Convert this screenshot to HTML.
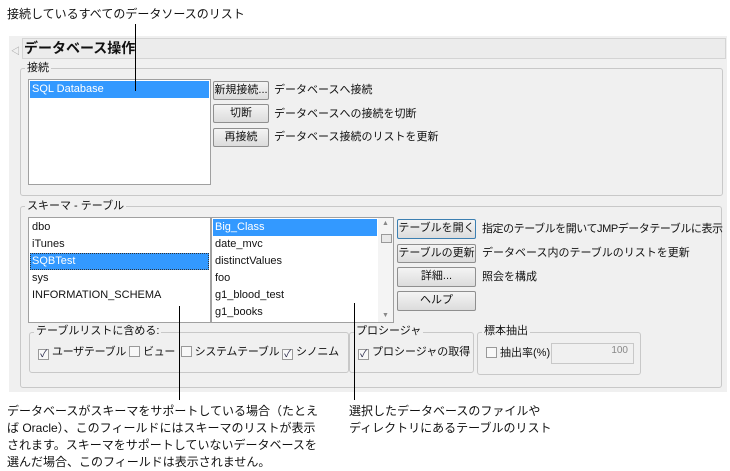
<!DOCTYPE html>
<html><head><meta charset="utf-8"><style>
*{box-sizing:border-box;margin:0;padding:0}
body{width:730px;height:469px;background:#fff;position:relative;overflow:hidden;font-family:"Liberation Sans","Noto Sans CJK JP",sans-serif;font-size:11px;color:#111}
.a{position:absolute}
.panel{left:9px;top:36px;width:718px;height:356px;background:#f0f0f0}
.hdr{left:22px;top:38px;width:704px;height:21px;background:#ececec;border:1px solid #d4d4d4;font-weight:bold;font-size:14px;padding:0 0 0 1px;line-height:18px}
.grp{border:1px solid #c8c8c8;border-radius:3px}
.lg{background:#f0f0f0;padding:0 2px;font-size:11px;line-height:12px}
.list{background:#fff;border:1px solid #a0a0a0}
.row{position:absolute;left:1px;height:17px;line-height:17px;padding-left:2px;font-size:11px}
.sel{background:#3399ff;color:#fff}
.btn{border:1px solid #8f8f8f;border-radius:2px;background:linear-gradient(#f4f4f4,#dcdcdc);text-align:center;font-size:11px;line-height:17px;white-space:nowrap;overflow:hidden}
.t{font-size:11px;line-height:14px;white-space:nowrap}
.cb{display:inline-block;width:11px;height:11px;border:1px solid #999;background:#f8f8f8;vertical-align:-2px;margin-right:3px;font-size:10px;line-height:9px;text-align:center;color:#224}
.ln{background:#000;width:1px}
.ann{font-size:12px;line-height:17px;color:#111;white-space:nowrap}
</style></head><body>
<div class="a ann" style="left:7px;top:6px">接続しているすべてのデータソースのリスト</div>
<div class="a panel"></div>
<div class="a" style="left:11px;top:44px;font-size:9px;color:#999">◁</div>
<div class="a hdr">データベース操作</div>

<div class="a grp" style="left:20px;top:68px;width:703px;height:128px"></div>
<div class="a lg" style="left:25px;top:62px">接続</div>
<div class="a list" style="left:28px;top:79px;width:183px;height:106px">
<div class="row sel" style="top:1px;width:179px">SQL Database</div></div>
<div class="a btn" style="left:213px;top:81px;width:56px;height:19px">新規接続...</div>
<div class="a btn" style="left:213px;top:104px;width:56px;height:19px">切断</div>
<div class="a btn" style="left:213px;top:128px;width:56px;height:19px">再接続</div>
<div class="a t" style="left:274px;top:83px">データベースへ接続</div>
<div class="a t" style="left:274px;top:107px">データベースへの接続を切断</div>
<div class="a t" style="left:274px;top:130px">データベース接続のリストを更新</div>

<div class="a grp" style="left:20px;top:206px;width:702px;height:182px"></div>
<div class="a lg" style="left:25px;top:200px">スキーマ - テーブル</div>
<div class="a list" style="left:28px;top:217px;width:183px;height:106px">
<div class="row" style="top:1px">dbo</div>
<div class="row" style="top:18px">iTunes</div>
<div class="row sel" style="top:35px;width:179px;outline:1px dotted #333;outline-offset:-1px">SQBTest</div>
<div class="row" style="top:52px">sys</div>
<div class="row" style="top:69px">INFORMATION_SCHEMA</div></div>
<div class="a list" style="left:211px;top:217px;width:183px;height:106px">
<div class="row sel" style="top:1px;width:164px">Big_Class</div>
<div class="row" style="top:18px">date_mvc</div>
<div class="row" style="top:35px">distinctValues</div>
<div class="row" style="top:52px">foo</div>
<div class="row" style="top:69px">g1_blood_test</div>
<div class="row" style="top:86px">g1_books</div>
<div class="a" style="left:166px;top:0;width:15px;height:104px;background:#f4f4f4"></div>
<div class="a" style="left:169px;top:16px;width:11px;height:9px;border:1px solid #999;background:#e8e8e8"></div>
<div class="a" style="left:170px;top:2px;font-size:7px;color:#888">▲</div>
<div class="a" style="left:170px;top:94px;font-size:7px;color:#888">▼</div></div>
<div class="a btn" style="left:397px;top:219px;width:79px;height:20px;border-color:#3c7fb1">テーブルを開く</div>
<div class="a btn" style="left:397px;top:244px;width:79px;height:19px">テーブルの更新</div>
<div class="a btn" style="left:397px;top:267px;width:79px;height:20px">詳細...</div>
<div class="a btn" style="left:397px;top:291px;width:79px;height:20px">ヘルプ</div>
<div class="a t" style="left:482px;top:222px;letter-spacing:-0.45px">指定のテーブルを開いてJMPデータテーブルに表示</div>
<div class="a t" style="left:482px;top:246px">データベース内のテーブルのリストを更新</div>
<div class="a t" style="left:482px;top:270px">照会を構成</div>

<div class="a grp" style="left:29px;top:332px;width:320px;height:41px"></div>
<div class="a lg" style="left:34px;top:325px">テーブルリストに含める:</div>
<div class="a t" style="left:38px;top:345px;letter-spacing:-0.3px"><span class="cb">✓</span>ユーザテーブル<span class="cb" style="margin-left:3px"></span>ビュー &nbsp;<span class="cb"></span>システムテーブル <span class="cb">✓</span>シノニム</div>
<div class="a grp" style="left:349px;top:332px;width:125px;height:41px"></div>
<div class="a lg" style="left:354px;top:325px">プロシージャ</div>
<div class="a t" style="left:358px;top:345px"><span class="cb">✓</span>プロシージャの取得</div>
<div class="a grp" style="left:477px;top:332px;width:164px;height:43px"></div>
<div class="a lg" style="left:482px;top:325px">標本抽出</div>
<div class="a t" style="left:486px;top:346px"><span class="cb"></span>抽出率(%)</div>
<div class="a" style="left:551px;top:343px;width:83px;height:21px;border:1px solid #c8c8c8;background:#f0f0f0;text-align:right;padding-right:5px;font-size:10px;color:#888;line-height:14px">100</div>

<div class="a ln" style="left:135px;top:24px;height:67px"></div>
<div class="a ln" style="left:179px;top:306px;height:94px"></div>
<div class="a ln" style="left:354px;top:303px;height:97px"></div>
<div class="a ann" style="left:7px;top:403px">データベースがスキーマをサポートしている場合（たとえ<br>ば Oracle）、このフィールドにはスキーマのリストが表示<br>されます。スキーマをサポートしていないデータベースを<br>選んだ場合、このフィールドは表示されません。</div>
<div class="a ann" style="left:349px;top:403px">選択したデータベースのファイルや<br>ディレクトリにあるテーブルのリスト</div>
</body></html>
